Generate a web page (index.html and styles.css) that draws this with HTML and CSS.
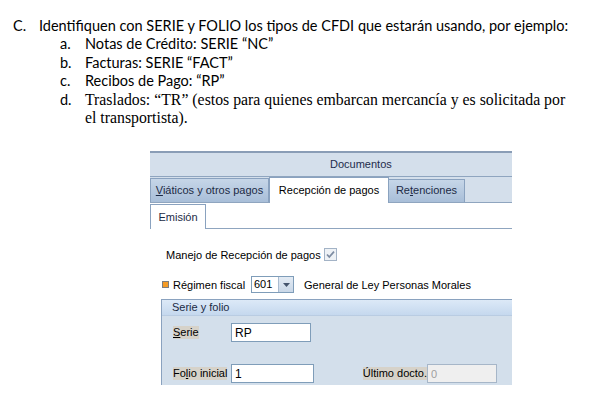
FILE: index.html
```html
<!DOCTYPE html>
<html lang="es">
<head>
    <meta charset="UTF-8">
    <title>Serie y folio</title>
    <link rel="stylesheet" href="styles.css">
</head>
<body>
    <div class="doc">
        <div class="item"><span class="mark">C.</span><span>Identifiquen con SERIE y FOLIO los tipos de CFDI que estarán usando, por ejemplo:</span></div>
        <div class="sub">
            <div class="item"><span class="mark">a.</span><span>Notas de Crédito: SERIE “NC”</span></div>
            <div class="item"><span class="mark">b.</span><span>Facturas: SERIE “FACT”</span></div>
            <div class="item"><span class="mark">c.</span><span>Recibos de Pago: “RP”</span></div>
            <div class="item"><span class="mark">d.</span><span class="serif">Traslados: “TR” (estos para quienes embarcan mercancía y es solicitada por<br>el transportista).</span></div>
        </div>
    </div>

    <div class="window">
        <div class="title">Documentos</div>
        <div class="tabs">
            <div class="tab tab-viaticos"><u>V</u>iáticos y otros pagos</div>
            <div class="tab tab-active">Recepción de pagos</div>
            <div class="tab tab-retenciones">Re<u>t</u>enciones</div>
        </div>
        <div class="subtabs">
            <div class="subtab">Emisión</div>
        </div>
        <div class="content">
            <div class="row row-check">
                <span>Manejo de Recepción de pagos</span>
                <svg class="check" width="13" height="13" viewBox="0 0 13 13">
                    <rect x="0.5" y="0.5" width="12" height="12" fill="#eef2f6" stroke="#a3b3c6"/>
                    <path d="M3 6.5 L5.3 9 L10 3.6" fill="none" stroke="#7d8ca2" stroke-width="1.7"/>
                </svg>
            </div>
            <div class="row row-regimen">
                <span class="required"></span>
                <span class="regimen-label">Régimen fiscal</span>
                <div class="combo">
                    <span class="combo-value">601</span>
                    <span class="combo-btn">
                        <svg width="7" height="4" viewBox="0 0 7 4"><path d="M0 0 H7 L3.5 4 Z" fill="#44546c"/></svg>
                    </span>
                </div>
                <span class="regimen-name">General de Ley Personas Morales</span>
            </div>
            <div class="group">
                <div class="group-head">Serie y folio</div>
                <div class="group-body">
                    <span class="label"><u>S</u>erie</span>
                    <input class="input input-serie" type="text" value="RP">
                    <span></span>
                    <span></span>

                    <span class="label">Fo<u>l</u>io inicial</span>
                    <input class="input input-folio" type="text" value="1">
                    <span class="label label-last">Último docto.</span>
                    <input class="input input-off" type="text" value="0" disabled>
                </div>
            </div>
        </div>
    </div>
</body>
</html>
```

FILE: styles.css
```css
body {
    margin: 0;
    background-color: #fff;
    font-family: "Liberation Sans", Arial, sans-serif;
}

/* document text */
.doc {
    padding: 17px 0 0 13px;
    font-family: Lato, "Open Sans", sans-serif;
    font-size: 14.5px;
    line-height: 18.4px;
    color: #000;
    white-space: nowrap;
}

.item {
    display: flex;
}

.mark {
    flex: none;
    width: 26px;
}

.sub {
    padding-left: 47px;
}

.sub .mark {
    width: 25px;
}

.serif {
    font-family: "Liberation Serif", "Times New Roman", serif;
    font-size: 15.8px;
}

/* window */
.window {
    margin: 24px 0 0 150px;
    width: 362px;
    font-size: 11px;
    color: #000;
}

.title {
    height: 23px;
    line-height: 23px;
    padding-left: 180px;
    background-color: #d4dfeb;
    border-top: 2px solid #8a9db6;
    border-bottom: 1px solid #8fa5bf;
    color: #1d2c4b;
}

.tabs {
    display: flex;
    align-items: flex-end;
    height: 25px;
    background-color: #d4dfeb;
    border-bottom: 1px solid #8fa5bf;
}

.tab {
    box-sizing: border-box;
    height: 24px;
    line-height: 22px;
    text-align: center;
    border: 1px solid #8aa2bf;
    border-bottom: none;
    background: linear-gradient(#c6d6e8, #a8bed8);
    color: #1c2a45;
}

.tab-viaticos {
    width: 119px;
}

.tab-active {
    width: 120px;
    height: 26px;
    margin-bottom: -1px;
    line-height: 24px;
    background: #fff;
    color: #000;
}

.tab-retenciones {
    width: 76px;
    height: 23px;
    line-height: 21px;
    border-left: none;
}

.subtabs {
    display: flex;
    align-items: flex-start;
    height: 24px;
    padding-top: 1px;
    border-bottom: 1px solid #8fa5bf;
}

.subtab {
    box-sizing: border-box;
    width: 56px;
    height: 25px;
    margin-bottom: -1px;
    line-height: 24px;
    text-align: center;
    background: #fff;
    border: 1px solid #8aa2bf;
    border-bottom: none;
    color: #1c2a45;
}

.content {
    height: 156px;
    padding-top: 17px;
    box-sizing: border-box;
    overflow: hidden;
}

.row {
    display: flex;
    align-items: center;
    height: 17px;
}

.row-check {
    padding-left: 16px;
    gap: 3px;
}

.row-regimen {
    margin-top: 13px;
    padding-left: 12px;
}

.required {
    width: 5px;
    height: 5px;
    background-color: #f59b25;
    border: 1px solid #7d7d7d;
}

.regimen-label {
    margin-left: 4px;
    width: 78px;
}

.combo {
    display: flex;
    box-sizing: border-box;
    width: 43px;
    height: 17px;
    border: 1px solid #7f9db9;
    background: #fff;
}

.combo-value {
    width: 24px;
    padding-left: 2px;
    line-height: 15px;
}

.combo-btn {
    flex: 1;
    display: flex;
    align-items: center;
    justify-content: center;
    background: linear-gradient(#e3ebf4, #c9d7e7);
    border-left: 1px solid #a9bbd0;
}

.regimen-name {
    margin-left: 10px;
}

/* serie y folio */
.group {
    margin: 6px 0 0 11px;
    height: 86px;
    background-color: #d3dfeb;
    border-left: 1px solid #8aa2bf;
    border-top: 1px solid #8aa2bf;
}

.group-head {
    height: 15px;
    line-height: 15px;
    padding-left: 10px;
    background: linear-gradient(#dce9f7, #c5d8ee);
    border-bottom: 1px solid #b9cce2;
    color: #1a2a44;
}

.group-body {
    display: grid;
    grid-template-columns: 58px 83px 113px 70px;
    grid-template-rows: 19px 19px;
    row-gap: 22px;
    padding: 7px 0 0 11px;
    align-items: center;
}

.label {
    justify-self: start;
    line-height: 13px;
    background-color: #d6d2c9;
}

.label-last {
    justify-self: end;
}

.input {
    box-sizing: border-box;
    height: 19px;
    margin: 0;
    padding: 0 0 0 3px;
    border: 1px solid #7f9db9;
    background: #fff;
    font-family: "Liberation Sans", Arial, sans-serif;
    font-size: 12px;
    color: #000;
}

.input-serie {
    width: 80px;
}

.input-folio {
    width: 83px;
}

.input-off {
    width: 70px;
    background-color: #efefef;
    border-color: #a6b6c8;
    color: #a0a0a0;
    font-size: 11px;
}
```
